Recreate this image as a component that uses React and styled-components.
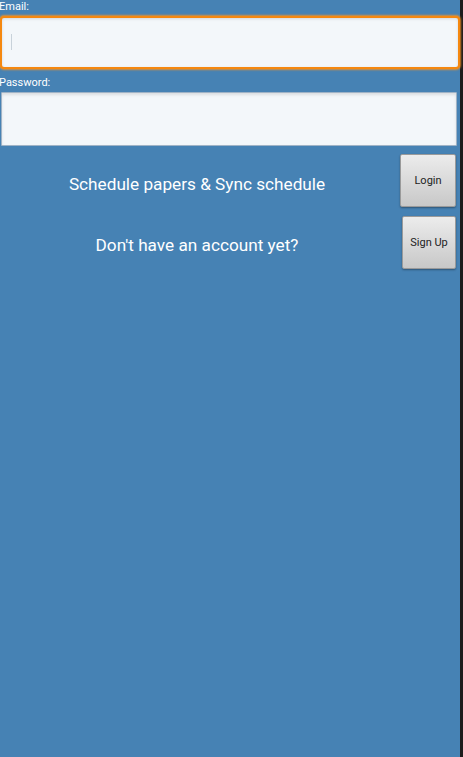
import React from "react";
import styled, { createGlobalStyle } from "styled-components";

const Global = createGlobalStyle`
  html, body { margin: 0; padding: 0; background: #1c1c1c; }
  body { font-family: Roboto, "Noto Sans", Arial, sans-serif; }
  * { box-sizing: border-box; }
`;

const Page = styled.div`
  display: flex;
  min-height: 100vh;
`;

const Content = styled.div`
  width: 460px;
  background: #4682b4;
  display: flex;
  flex-direction: column;
`;

const Edge = styled.div`
  flex: 1;
  background: #1c1c1c;
`;

const Label = styled.label`
  display: block;
  color: #ffffff;
  font-size: 11px;
  line-height: 12px;
  margin: ${(p) => p.$top}px 0 0 -1px;
  height: 14px;
`;

const FieldWrap = styled.div`
  position: relative;
  margin: ${(p) => (p.$focused ? "1px 0 0 0" : "1px 3px 0 1px")};
`;

const Input = styled.input`
  display: block;
  width: 100%;
  height: ${(p) => (p.$focused ? 53 : 54)}px;
  background: #f3f7fa;
  border: ${(p) => (p.$focused ? "2px solid #f5880f" : "1px solid #9fb3c6")};
  border-radius: ${(p) => (p.$focused ? "4px" : "1px")};
  box-shadow: ${(p) =>
    p.$focused
      ? "0 0 2px 1px rgba(255,150,30,0.8), inset 0 1px 3px rgba(0,0,0,0.12)"
      : "inset 0 2px 3px rgba(0,0,0,0.1)"};
  outline: none;
  padding: 0 10px;
  font-family: inherit;
  font-size: 16px;
`;

const Caret = styled.span`
  position: absolute;
  left: 11px;
  top: 18px;
  width: 1px;
  height: 16px;
  background: #c8d2da;
`;

const Rows = styled.div`
  display: flex;
  flex-direction: column;
  gap: 9px;
  margin-top: 8px;
`;

const Row = styled.div`
  display: flex;
  align-items: center;
`;

const RowText = styled.div`
  flex: 1;
  text-align: center;
  color: #ffffff;
  font-size: 17.2px;
  padding-right: 6px;
  padding-top: ${(p) => p.$pt || 0}px;
`;

const Button = styled.button`
  width: ${(p) => p.$w}px;
  height: 53px;
  margin-right: 4px;
  margin-left: ${(p) => p.$ml}px;
  font-family: inherit;
  font-size: 11px;
  color: #222;
  border: 1px solid #9a9a9a;
  border-radius: 2px;
  background: linear-gradient(#ececec, #c8c8c8);
  box-shadow: 0 1px 2px rgba(0, 0, 0, 0.35);
  padding: 0;
`;

export default function App() {
  return (
    <>
      <Global />
      <Page>
        <Content>
          <Label $top={1}>Email:</Label>
          <FieldWrap $focused>
            <Input $focused type="text" />
            <Caret />
          </FieldWrap>
          <Label $top={8}>Password:</Label>
          <FieldWrap>
            <Input type="password" />
          </FieldWrap>
          <Rows>
            <Row>
              <RowText $pt={6}>Schedule papers &amp; Sync schedule</RowText>
              <Button $w={56} $ml={0}>Login</Button>
            </Row>
            <Row>
              <RowText $pt={5}>Don't have an account yet?</RowText>
              <Button $w={54} $ml={2}>Sign Up</Button>
            </Row>
          </Rows>
        </Content>
        <Edge />
      </Page>
    </>
  );
}
